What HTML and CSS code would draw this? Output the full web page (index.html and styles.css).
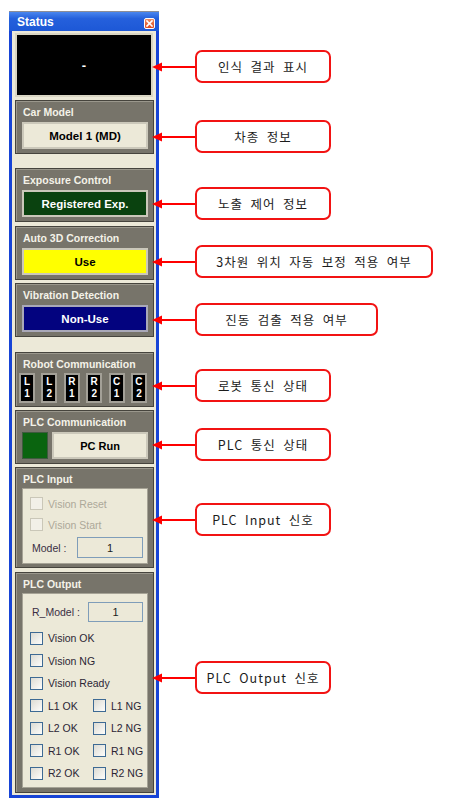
FILE: index.html
```html
<!DOCTYPE html>
<html lang="ko">
<head>
    <meta charset="UTF-8">
    <meta name="viewport" content="width=device-width, initial-scale=1.0">
    <title>Status</title>
    <link rel="stylesheet" href="styles.css">
</head>
<body>
<div class="page">

    <div class="window">
        <div class="titlebar">
            <span class="title">Status</span>
            <span class="close">
                <svg width="9" height="9" viewBox="0 0 9 9"><path d="M2 2 L7 7 M7 2 L2 7" stroke="#fff" stroke-width="1.6" stroke-linecap="square"/></svg>
            </span>
        </div>

        <div class="win-body">
            <div class="display">-</div>

            <div class="group g-car">
                <div class="label">Car Model</div>
                <div class="value">Model 1 (MD)</div>
            </div>

            <div class="group g-exp">
                <div class="label">Exposure Control</div>
                <div class="value value-green">Registered Exp.</div>
            </div>

            <div class="group g-3d">
                <div class="label">Auto 3D Correction</div>
                <div class="value value-yellow">Use</div>
            </div>

            <div class="group g-vib">
                <div class="label">Vibration Detection</div>
                <div class="value value-navy">Non-Use</div>
            </div>

            <div class="group g-robot">
                <div class="label label-tight">Robot Communication</div>
                <div class="robot-row">
                    <div class="robot-box"><span>L</span><span>1</span></div>
                    <div class="robot-box"><span>L</span><span>2</span></div>
                    <div class="robot-box"><span>R</span><span>1</span></div>
                    <div class="robot-box"><span>R</span><span>2</span></div>
                    <div class="robot-box"><span>C</span><span>1</span></div>
                    <div class="robot-box"><span>C</span><span>2</span></div>
                </div>
            </div>

            <div class="group g-plc">
                <div class="label">PLC Communication</div>
                <div class="plc-row">
                    <div class="lamp"></div>
                    <div class="value value-run">PC Run</div>
                </div>
            </div>

            <div class="group g-in">
                <div class="label label-tight">PLC Input</div>
                <div class="inner inner-in">
                    <div class="check-row disabled"><span class="box"></span>Vision Reset</div>
                    <div class="check-row disabled"><span class="box"></span>Vision Start</div>
                    <div class="field-row field-model">
                        <span class="field-label">Model :</span>
                        <span class="field">1</span>
                    </div>
                </div>
            </div>

            <div class="group g-out">
                <div class="label label-tight">PLC Output</div>
                <div class="inner inner-out">
                    <div class="field-row field-rmodel">
                        <span class="field-label">R_Model :</span>
                        <span class="field">1</span>
                    </div>
                    <div class="out-list">
                        <div class="check-row wide"><span class="box"></span>Vision OK</div>
                        <div class="check-row wide"><span class="box"></span>Vision NG</div>
                        <div class="check-row wide"><span class="box"></span>Vision Ready</div>
                        <div class="check-row"><span class="box"></span>L1 OK</div>
                        <div class="check-row"><span class="box"></span>L1 NG</div>
                        <div class="check-row"><span class="box"></span>L2 OK</div>
                        <div class="check-row"><span class="box"></span>L2 NG</div>
                        <div class="check-row"><span class="box"></span>R1 OK</div>
                        <div class="check-row"><span class="box"></span>R1 NG</div>
                        <div class="check-row"><span class="box"></span>R2 OK</div>
                        <div class="check-row"><span class="box"></span>R2 NG</div>
                    </div>
                </div>
            </div>
        </div>
    </div>

    <!-- callouts -->
    <div class="note n1">
        <svg class="arrow" width="43" height="10" viewBox="0 0 43 10"><path d="M8 5 H43" stroke="#f00" stroke-width="2"/><polygon points="0,5 10,0.5 10,9.5" fill="#f00"/></svg>
        <div class="note-box">인식 결과 표시</div>
    </div>
    <div class="note n2">
        <svg class="arrow" width="43" height="10" viewBox="0 0 43 10"><path d="M8 5 H43" stroke="#f00" stroke-width="2"/><polygon points="0,5 10,0.5 10,9.5" fill="#f00"/></svg>
        <div class="note-box">차종 정보</div>
    </div>
    <div class="note n3">
        <svg class="arrow" width="43" height="10" viewBox="0 0 43 10"><path d="M8 5 H43" stroke="#f00" stroke-width="2"/><polygon points="0,5 10,0.5 10,9.5" fill="#f00"/></svg>
        <div class="note-box">노출 제어 정보</div>
    </div>
    <div class="note n4">
        <svg class="arrow" width="43" height="10" viewBox="0 0 43 10"><path d="M8 5 H43" stroke="#f00" stroke-width="2"/><polygon points="0,5 10,0.5 10,9.5" fill="#f00"/></svg>
        <div class="note-box note-long">3차원 위치 자동 보정 적용 여부</div>
    </div>
    <div class="note n5">
        <svg class="arrow" width="43" height="10" viewBox="0 0 43 10"><path d="M8 5 H43" stroke="#f00" stroke-width="2"/><polygon points="0,5 10,0.5 10,9.5" fill="#f00"/></svg>
        <div class="note-box note-mid">진동 검출 적용 여부</div>
    </div>
    <div class="note n6">
        <svg class="arrow" width="43" height="10" viewBox="0 0 43 10"><path d="M8 5 H43" stroke="#f00" stroke-width="2"/><polygon points="0,5 10,0.5 10,9.5" fill="#f00"/></svg>
        <div class="note-box">로봇 통신 상태</div>
    </div>
    <div class="note n7">
        <svg class="arrow" width="43" height="10" viewBox="0 0 43 10"><path d="M8 5 H43" stroke="#f00" stroke-width="2"/><polygon points="0,5 10,0.5 10,9.5" fill="#f00"/></svg>
        <div class="note-box">PLC 통신 상태</div>
    </div>
    <div class="note n8">
        <svg class="arrow" width="43" height="10" viewBox="0 0 43 10"><path d="M8 5 H43" stroke="#f00" stroke-width="2"/><polygon points="0,5 10,0.5 10,9.5" fill="#f00"/></svg>
        <div class="note-box">PLC Input 신호</div>
    </div>
    <div class="note n9">
        <svg class="arrow" width="43" height="10" viewBox="0 0 43 10"><path d="M8 5 H43" stroke="#f00" stroke-width="2"/><polygon points="0,5 10,0.5 10,9.5" fill="#f00"/></svg>
        <div class="note-box">PLC Output 신호</div>
    </div>

</div>
</body>
</html>
```

FILE: styles.css
```css
*{
    margin: 0;
    padding: 0;
    box-sizing: border-box;
}
body{
    background-color: #fff;
    font-family: "Liberation Sans", Arial, sans-serif;
}
.page{
    position: relative;
    display: flow-root;
    width: 463px;
    height: 803px;
}

/* window */
.window{
    margin: 12px 0 0 9px;
    width: 150px;
    border: 3px solid #1744d6;
    border-top: 0;
    box-shadow: 0 -1px 0 #8d8e96;
    background-color: #ece9d8;
}
.titlebar{
    height: 19px;
    margin: 0 -3px;
    padding: 0 4px 0 8px;
    display: flex;
    justify-content: space-between;
    align-items: center;
    background: linear-gradient(to bottom, #4a86ee, #2560dc 35%, #1d58d6);
}
.title{
    color: #fff;
    font-weight: bold;
    font-size: 12px;
}
.close{
    width: 11px;
    height: 11px;
    margin-top: 3px;
    border: 1px solid #fff;
    border-radius: 2px;
    background: linear-gradient(to bottom, #f08a5c, #dc4a22);
    display: flex;
    justify-content: center;
    align-items: center;
}
.close svg{
    display: block;
}
.win-body{
    padding: 0 2px 2px 0;
}
.display{
    height: 64px;
    margin: 2px 1px 0 3px;
    background-color: #000;
    border: 2px solid #d9d5c4;
    color: #fff;
    font-weight: bold;
    font-size: 13px;
    display: flex;
    justify-content: center;
    align-items: center;
}

/* group boxes */
.group{
    width: 139px;
    margin-left: 3px;
    background-color: #77746a;
    border: 1px solid #46443d;
    box-shadow: inset 1px 1px 0 #9a978c;
    padding: 4px 5px 4px 6px;
}
.g-car{ margin-top: 3px; }
.g-exp{ margin-top: 14px; }
.g-3d{ margin-top: 4px; }
.g-vib{ margin-top: 3px; }
.g-robot{ margin-top: 15px; padding-bottom: 3px; }
.g-plc{ margin-top: 3px; }
.g-in{ margin-top: 3px; padding-bottom: 3px; }
.g-out{ margin-top: 4px; }

.label{
    color: #f4f2e8;
    font-weight: bold;
    font-size: 10.5px;
    line-height: 14px;
    margin-bottom: 3px;
    padding-left: 1px;
    white-space: nowrap;
}
.label-tight{
    margin-bottom: 2px;
}
.value{
    height: 27px;
    background-color: #ece9d8;
    border: 2px solid #cbc8ba;
    color: #000;
    font-weight: bold;
    font-size: 11.5px;
    display: flex;
    justify-content: center;
    align-items: center;
}
.value-green{
    background-color: #0a420f;
    color: #fff;
}
.value-yellow{
    background-color: #ffff00;
}
.value-navy{
    background-color: #03037f;
    color: #fff;
    border-color: #a9a8b8;
}
.value-run{
    flex: 1;
    font-size: 11px;
}

/* robot communication */
.robot-row{
    display: flex;
    justify-content: space-between;
    margin: 0 1px 0 -3px;
}
.robot-box{
    width: 16px;
    height: 30px;
    background-color: #000;
    border: 2px solid #a3a097;
    color: #fff;
    font-weight: bold;
    font-size: 10px;
    line-height: 12px;
    display: flex;
    flex-direction: column;
    align-items: center;
    justify-content: center;
}

/* plc communication */
.plc-row{
    display: flex;
    gap: 4px;
}
.lamp{
    width: 26px;
    height: 27px;
    background-color: #0a640f;
    border: 1px solid #3f5a3f;
}

/* inner panels */
.inner{
    background-color: #ece9d8;
    border: 1px solid #a6a396;
}
.inner-in{
    padding: 4px 4px 5px 7px;
}
.inner-out{
    padding: 8px 4px 2.5px 7px;
}
.check-row{
    height: 21px;
    display: flex;
    align-items: center;
    gap: 5px;
    font-size: 10.5px;
    color: #2b2535;
    white-space: nowrap;
}
.check-row .box{
    flex: none;
    width: 13px;
    height: 13px;
    border: 1px solid #3d6a94;
    background: linear-gradient(135deg, #dcdbd3, #fdfdfb);
}
.check-row.disabled{
    color: #aca899;
}
.check-row.disabled .box{
    border-color: #cac7b8;
    background: #f2f0e8;
}
.field-row{
    display: flex;
    align-items: center;
    padding: 0 0 0 2px;
    font-size: 10.5px;
    color: #3a2f44;
}
.field-model{
    margin-top: 2px;
    height: 21px;
}
.field-rmodel{
    height: 20px;
}
.field{
    margin-left: auto;
    height: 100%;
    border: 1px solid #7f9db9;
    background-color: #ece9d8;
    color: #1c1c1c;
    font-size: 11px;
    display: flex;
    justify-content: center;
    align-items: center;
}
.field-model .field{
    width: 66px;
}
.field-rmodel .field{
    width: 55px;
}
.out-list{
    margin-top: 5px;
    display: grid;
    grid-template-columns: 63px 1fr;
}
.out-list .check-row{
    height: 22.5px;
}
.out-list .wide{
    grid-column: 1 / 3;
}

/* callouts */
.note{
    position: absolute;
    left: 152px;
    display: flex;
    align-items: center;
}
.arrow{
    display: block;
}
.note-box{
    width: 136px;
    height: 33px;
    border: 2px solid #f21313;
    border-radius: 7px;
    background-color: #fff;
    font-family: "Noto Sans CJK KR", sans-serif;
    font-size: 12.5px;
    letter-spacing: 1px;
    word-spacing: 3px;
    color: #1c1c1c;
    display: flex;
    justify-content: center;
    align-items: center;
}
.note-long{
    width: 238px;
}
.note-mid{
    width: 183px;
}
.n1{ top: 50px; }
.n2{ top: 120px; }
.n3{ top: 187px; }
.n4{ top: 245px; }
.n5{ top: 303px; }
.n6{ top: 369px; }
.n7{ top: 428px; }
.n8{ top: 503px; }
.n9{ top: 661px; }
```
